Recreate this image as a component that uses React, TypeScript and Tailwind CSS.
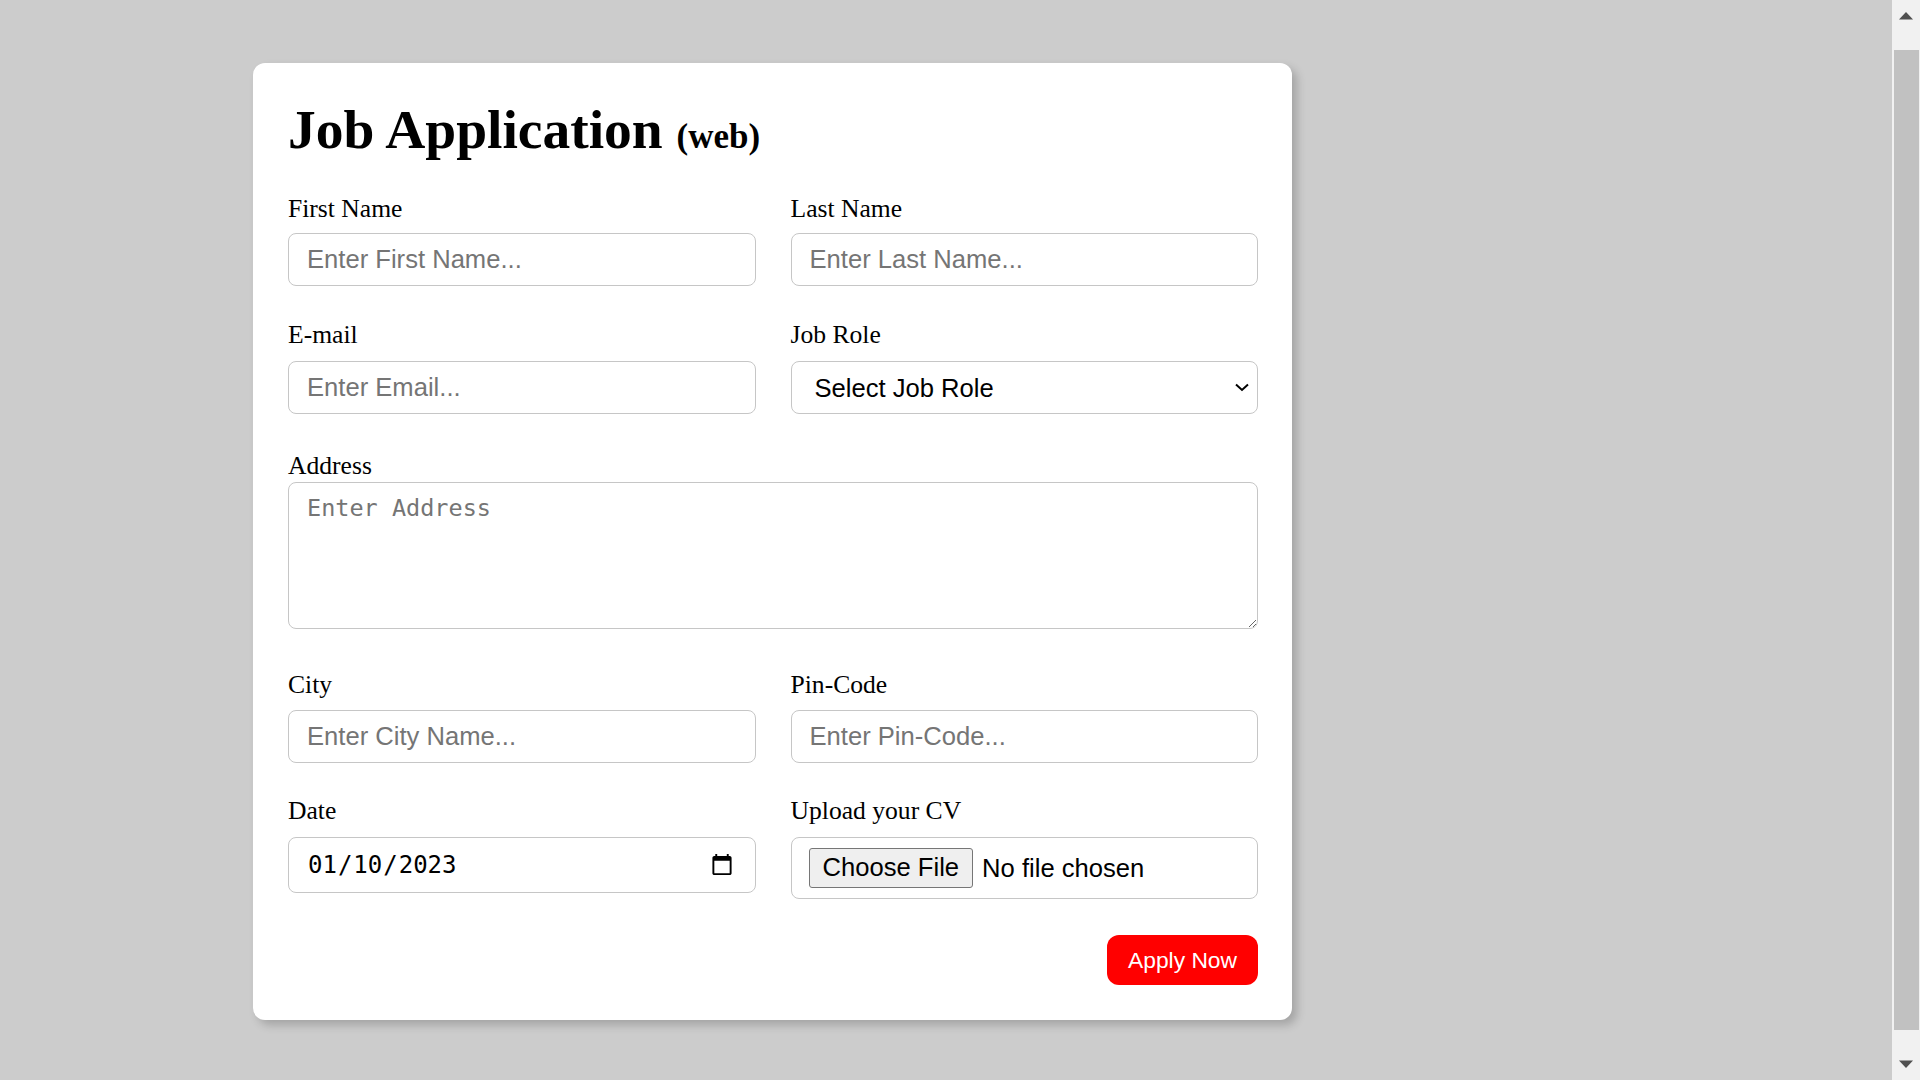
const inputCls =
  "w-full h-[53px] box-border border border-[#c6c6c6] rounded-[8px] bg-white px-[18px] text-[25.6px] leading-[normal] text-black font-['Liberation_Sans',Arial,sans-serif] placeholder:text-[#757575] outline-none";

const labelCls =
  "block text-[25.6px] leading-[normal] text-black font-['Liberation_Serif','Times_New_Roman',serif]";

const Field = ({
  label,
  mb = "mb-[9px]",
  children,
}: {
  label: string;
  mb?: string;
  children: React.ReactNode;
}) => (
  <div className="flex flex-col">
    <label className={`${labelCls} ${mb}`}>{label}</label>
    {children}
  </div>
);

const Scrollbar = () => (
  <div className="w-[28px] h-[1080px] shrink-0 bg-[#f1f1f1] flex flex-col">
    <div className="h-[50px] flex justify-center pt-[12px]">
      <svg width="14" height="8" viewBox="0 0 14 8">
        <path d="M7 0 L14 7.5 L0 7.5 Z" fill="#505050" />
      </svg>
    </div>
    <div className="flex-1 ml-[2px] mr-[1px] bg-[#c1c1c1]" />
    <div className="h-[50px] flex justify-center items-end pb-[12px]">
      <svg width="14" height="8" viewBox="0 0 14 8">
        <path d="M0 0.5 L14 0.5 L7 8 Z" fill="#505050" />
      </svg>
    </div>
  </div>
);

export default function App() {
  return (
    <div className="flex w-full h-[1080px] overflow-hidden bg-[#cccccc]">
      <div className="flex-1 flex items-start">
        <form
          onSubmit={(e) => e.preventDefault()}
          className="ml-[253px] mt-[63px] w-[1039px] bg-white rounded-[12px] pl-[35px] pr-[34px] pt-[35px] pb-[35px] shadow-[5px_5px_10px_rgba(0,0,0,0.2)] flex flex-col"
        >
          <h1 className="text-[55.5px] font-bold leading-[normal] text-black font-['Liberation_Serif','Times_New_Roman',serif]">
            Job Application <span className="text-[35px]">(web)</span>
          </h1>

          <div className="grid grid-cols-2 gap-x-[35px] mt-[33px]">
            <Field label="First Name">
              <input className={inputCls} placeholder="Enter First Name..." />
            </Field>
            <Field label="Last Name">
              <input className={inputCls} placeholder="Enter Last Name..." />
            </Field>
          </div>

          <div className="grid grid-cols-2 gap-x-[35px] mt-[34px]">
            <Field label="E-mail" mb="mb-[11px]">
              <input className={inputCls} placeholder="Enter Email..." />
            </Field>
            <Field label="Job Role" mb="mb-[11px]">
              <div className="relative">
                <select
                  defaultValue=""
                  className="w-full h-[53px] box-border appearance-none border border-[#c6c6c6] rounded-[8px] bg-white pl-[23px] pr-[40px] text-[25.6px] leading-[normal] text-black font-['Liberation_Sans',Arial,sans-serif] outline-none"
                >
                  <option value="">Select Job Role</option>
                  <option value="frontend">Frontend Developer</option>
                  <option value="backend">Backend Developer</option>
                  <option value="fullstack">Full Stack Developer</option>
                </select>
                <svg
                  className="absolute right-[9px] top-[22px] pointer-events-none"
                  width="14"
                  height="9"
                  viewBox="0 0 14 9"
                >
                  <path d="M1 1.5 L7 7 L13 1.5" fill="none" stroke="#000" strokeWidth="2" />
                </svg>
              </div>
            </Field>
          </div>

          <div className="mt-[37px]">
            <Field label="Address" mb="mb-[1px]">
              <textarea
                placeholder="Enter Address"
                className="w-full h-[147px] box-border border border-[#c6c6c6] rounded-[8px] bg-white px-[18px] py-[11px] text-[23.5px] leading-[normal] text-black font-['DejaVu_Sans_Mono',monospace] placeholder:text-[#757575] outline-none"
              />
            </Field>
          </div>

          <div className="grid grid-cols-2 gap-x-[35px] mt-[41px]">
            <Field label="City" mb="mb-[9.5px]">
              <input className={inputCls} placeholder="Enter City Name..." />
            </Field>
            <Field label="Pin-Code" mb="mb-[9.5px]">
              <input className={inputCls} placeholder="Enter Pin-Code..." />
            </Field>
          </div>

          <div className="grid grid-cols-2 gap-x-[35px] mt-[33.5px] items-start">
            <Field label="Date" mb="mb-[10.5px]">
              <input
                type="date"
                defaultValue="2023-01-10"
                className="w-full h-[56px] box-border border border-[#c6c6c6] rounded-[8px] bg-white pl-[18px] pr-[19px] text-[24px] leading-[normal] text-black font-['DejaVu_Sans_Mono',monospace] outline-none"
              />
            </Field>
            <Field label="Upload your CV" mb="mb-[10.5px]">
              <input
                type="file"
                className="w-full h-[62px] box-border border border-[#c6c6c6] rounded-[8px] bg-white px-[17px] py-[10px] text-[25.6px] leading-[normal] text-black font-['Liberation_Sans',Arial,sans-serif] file:h-[40px] file:px-[13px] file:mr-[9px] file:bg-[#efefef] file:border file:border-solid file:border-[#767676] file:rounded-[3px] file:text-black file:text-[25.6px]"
              />
            </Field>
          </div>

          <button
            type="submit"
            className="self-end mt-[36.5px] h-[50px] px-[21px] rounded-[12px] bg-[#ff0000] text-white text-[22.8px] leading-[normal] font-['Liberation_Sans',Arial,sans-serif]"
          >
            Apply Now
          </button>
        </form>
      </div>
      <Scrollbar />
    </div>
  );
}
